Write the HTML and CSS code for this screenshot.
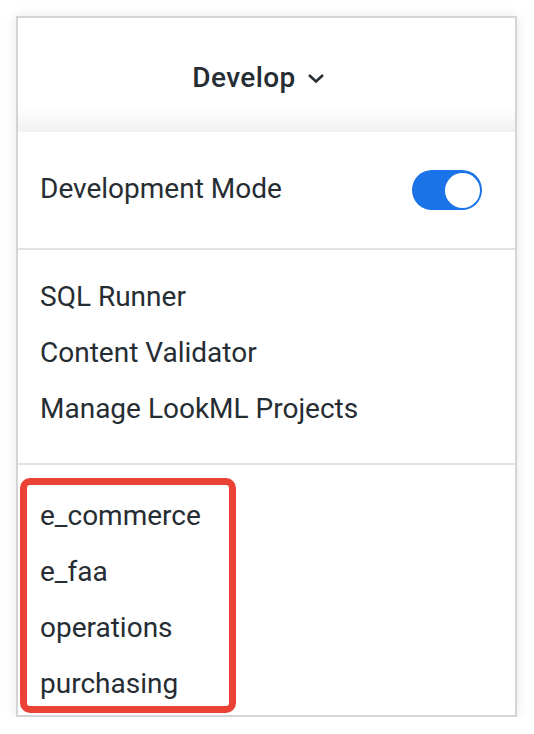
FILE: index.html
```html
<!DOCTYPE html>
<html lang="en">

<head>
    <meta charset="UTF-8">
    <meta name="viewport" content="width=device-width, initial-scale=1.0">
    <title>Develop menu</title>
    <link rel="stylesheet" href="styles.css">
</head>

<body>
    <div class="menu">
        <div class="menu-header">
            <span class="menu-title">Develop</span>
            <svg class="chevron" width="18" height="11" viewBox="0 0 18 11">
                <polyline points="2,2 9,8.5 16,2" fill="none" stroke="#262d33" stroke-width="2.6" />
            </svg>
        </div>

        <div class="menu-section mode-row">
            <span>Development Mode</span>
            <div class="toggle">
                <div class="toggle-knob"></div>
            </div>
        </div>

        <div class="menu-section links">
            <div class="menu-item">SQL Runner</div>
            <div class="menu-item">Content Validator</div>
            <div class="menu-item">Manage LookML Projects</div>
        </div>

        <div class="menu-section projects">
            <div class="menu-item">e_commerce</div>
            <div class="menu-item">e_faa</div>
            <div class="menu-item">operations</div>
            <div class="menu-item">purchasing</div>
            <div class="highlight"></div>
        </div>
    </div>
</body>

</html>
```

FILE: styles.css
```css
body {
    margin: 0;
    background: #fff;
    font-family: Roboto, 'Liberation Sans', sans-serif;
    color: #262d33;
}

.menu {
    margin: 16px 0 0 16px;
    width: 501px;
    height: 701px;
    box-sizing: border-box;
    border: 2px solid #d4d4d6;
    box-shadow: 0 0 12px 0 rgba(0, 0, 0, 0.1);
    display: flex;
    flex-direction: column;
}

.menu-header {
    height: 114px;
    display: flex;
    justify-content: center;
    align-items: center;
    gap: 11px;
    padding: 4px 16px 0 0;
    box-sizing: border-box;
    background: linear-gradient(to bottom, #fff 0, #fff 78%, #f1f1f1 100%);
}

.menu-title {
    font-size: 28px;
    font-weight: 500;
    letter-spacing: 0.4px;
}

.chevron {
    margin-top: 3px;
}

.menu-section {
    padding: 0 22px;
    font-size: 28px;
}

.mode-row {
    height: 116px;
    display: flex;
    align-items: center;
    justify-content: space-between;
    padding-right: 33px;
    border-bottom: 2px solid #e2e2e6;
}

.mode-row span {
    margin-top: -4px;
}

.toggle {
    width: 70px;
    height: 40px;
    border-radius: 20px;
    background-color: #1a73e8;
    display: flex;
    justify-content: flex-end;
    align-items: center;
    padding: 0 2px;
    box-sizing: border-box;
}

.toggle-knob {
    width: 35px;
    height: 35px;
    border-radius: 50%;
    background-color: #fff;
}

.menu-item {
    line-height: 56px;
}

.links {
    padding-top: 19px;
    padding-bottom: 26px;
    border-bottom: 2px solid #e2e2e6;
}

.projects {
    position: relative;
    padding-top: 23px;
}

.highlight {
    position: absolute;
    left: 2px;
    top: 13px;
    width: 216px;
    height: 235px;
    box-sizing: border-box;
    border: 7px solid #ea4335;
    border-radius: 10px;
}
```
